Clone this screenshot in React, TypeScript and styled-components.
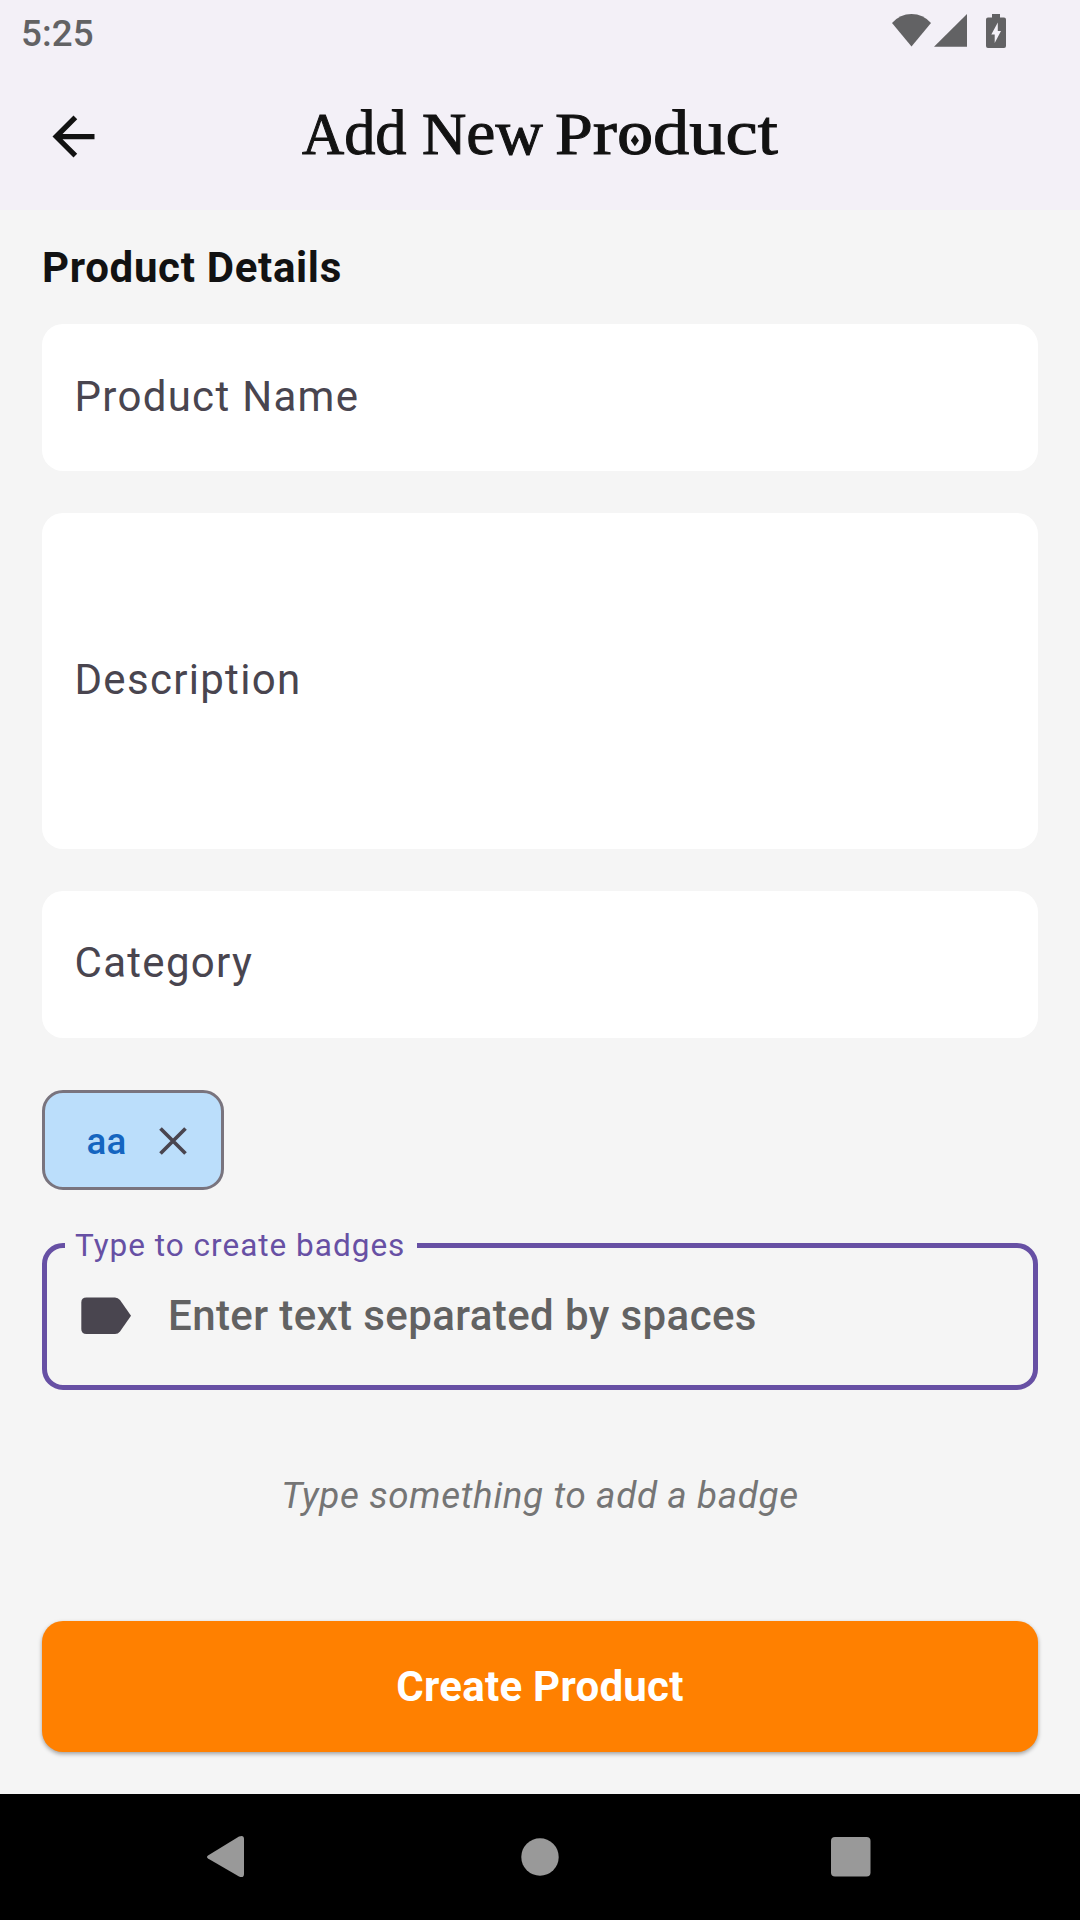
import React from "react";
import styled, { createGlobalStyle } from "styled-components";

const GlobalStyle = createGlobalStyle`
  * { box-sizing: border-box; }
  html, body { margin: 0; padding: 0; background: #f5f5f5; }
  body { font-family: Roboto, "Noto Sans", sans-serif; }
`;

const Screen = styled.div`
  width: 1080px;
  height: 1920px;
  display: flex;
  flex-direction: column;
  overflow: hidden;
  background: #f5f5f5;
`;

const StatusBar = styled.div`
  height: 63px;
  flex: none;
  display: flex;
  justify-content: space-between;
  padding: 0 72px 0 21px;
  background: #f3f0f7;
`;

const Clock = styled.span`
  font-size: 36.75px;
  line-height: 43px;
  padding-top: 12px;
  font-weight: 500;
  color: #626264;
  letter-spacing: 0.1px;
`;

const StatusIcons = styled.svg`
  width: 120px;
  height: 63px;
`;

const AppBar = styled.header`
  height: 147px;
  flex: none;
  display: grid;
  grid-template-columns: 147px 1fr 147px;
  align-items: center;
  background: #f3f0f7;
`;

const BackButton = styled.button`
  border: 0;
  padding: 0;
  background: none;
  display: flex;
  justify-content: center;
`;

const Title = styled.h1`
  margin: 0;
  padding-bottom: 7px;
  text-align: center;
  font-family: "Liberation Serif", serif;
  font-weight: 400;
  font-size: 59px;
  line-height: 70px;
  color: #121212;
  white-space: pre;
  -webkit-text-stroke: 1px #121212;
`;

const Word = styled.span<{ $width: number; $stretch: number }>`
  display: inline-block;
  width: ${(p) => p.$width}px;
  text-align: left;
  transform: scaleX(${(p) => p.$stretch});
  transform-origin: left;
  font-size: 63px;

  &::first-letter {
    font-size: 59px;
  }
`;

const StarO = styled.span`
  position: relative;
`;

const Sparkle = styled.svg`
  position: absolute;
  left: 50%;
  bottom: 21px;
  width: 7px;
  height: 13px;
  margin-left: -3.5px;
`;

const Form = styled.main`
  flex: 1;
  display: flex;
  flex-direction: column;
  padding: 33px 42px 42px;
`;

const SectionTitle = styled.h2`
  margin: 0 0 31px;
  height: 50px;
  font-size: 42px;
  line-height: 50px;
  font-weight: 700;
  letter-spacing: 0.68px;
  color: #121212;
`;

const Field = styled.div<{ $height: number; $lift?: number }>`
  height: ${(p) => p.$height}px;
  flex: none;
  margin-bottom: 42px;
  padding: 0 32.5px ${(p) => p.$lift ?? 3}px;
  display: flex;
  align-items: center;
  border-radius: 21px;
  background: #fff;
  color: #49454f;
  font-size: 42px;
  letter-spacing: 1.3px;
`;

const Chip = styled.div`
  width: 182px;
  height: 100px;
  flex: none;
  margin: 10px 0 37px;
  padding: 2px 34px 0 41.5px;
  display: flex;
  align-items: center;
  justify-content: space-between;
  border: 3px solid #79747e;
  border-radius: 21px;
  background: #bbdefb;
  color: #1565c0;
  font-size: 36.75px;
  font-weight: 500;
  letter-spacing: 0.26px;
`;

const RemoveIcon = styled.svg`
  width: 28px;
  height: 28px;
  margin-bottom: 1px;
`;

const BadgeField = styled.fieldset`
  height: 163px;
  flex: none;
  min-width: 0;
  margin: 0;
  padding: 0 34px;
  border: 5px solid #6750a4;
  border-radius: 21px;
`;

const Legend = styled.legend`
  height: 36px;
  margin-left: -16px;
  padding: 1px 12px 0 10px;
  font-size: 31.5px;
  line-height: 36px;
  color: #6750a4;
  letter-spacing: 1px;
`;

const BadgeInput = styled.div`
  height: 70px;
  margin-top: 17px;
  display: flex;
  align-items: center;
  gap: 37px;
  font-size: 42px;
  font-weight: 500;
  color: #626262;
  letter-spacing: 0.4px;
`;

const TagIcon = styled.svg`
  width: 50px;
  height: 38px;
  margin-top: 2px;
`;

const Helper = styled.p`
  margin: 84px 0 0;
  text-align: center;
  font-size: 36.75px;
  line-height: 44px;
  font-style: italic;
  color: #757575;
  letter-spacing: 0.66px;
`;

const SubmitButton = styled.button`
  margin-top: auto;
  height: 131px;
  flex: none;
  border: 0;
  border-radius: 21px;
  background: #ff8000;
  color: #fff;
  font-family: inherit;
  font-size: 42px;
  font-weight: 700;
  letter-spacing: 0.26px;
  box-shadow: 0 2px 4px rgba(0, 0, 0, 0.35);
`;

const NavBar = styled.nav`
  height: 126px;
  flex: none;
  display: flex;
  align-items: center;
  justify-content: space-between;
  padding: 0 194px;
  background: #000;
`;

const NavIcon = styled.svg`
  width: 70px;
  height: 70px;
  fill: #999;
`;

export default function App() {
  return (
    <Screen>
      <GlobalStyle />
      <StatusBar>
        <Clock>5:25</Clock>
        <StatusIcons viewBox="888 0 120 63" fill="#626264">
          <path d="M892 23Q900 14 911.500 14T931 23L911.500 46.500Z" />
          <path d="M934 46.700L967 14V46.700Z" />
          <path
            fillRule="evenodd"
            d="M992 14h8v3.500h4q2 0 2 2V46q0 2-2 2h-16q-2 0-2-2V19.500q0-2 2-2h4ZM997.800 22.500L991.300 34.500H994.700V43L1001 31H997.800Z"
          />
        </StatusIcons>
      </StatusBar>
      <AppBar>
        <BackButton aria-label="Back">
          <svg width="63" height="63" viewBox="0 0 24 24" fill="#121212">
            <path d="M20 11H7.830l5.590-5.590L12 4l-8 8 8 8 1.410-1.410L7.830 13H20z" />
          </svg>
        </BackButton>
        <Title>
          <Word $width={105} $stretch={0.99}>Add</Word>{" "}
          <Word $width={118} $stretch={1.04}>New</Word>{" "}
          <Word $width={223} $stretch={1.15}>
            Pr
            <StarO>
              o
              <Sparkle viewBox="0 0 8 13" fill="#121212">
                <path d="M4 0L8 6.500L4 13L0 6.500Z" />
              </Sparkle>
            </StarO>
            duct
          </Word>
        </Title>
      </AppBar>
      <Form>
        <SectionTitle>Product Details</SectionTitle>
        <Field $height={147}>Product Name</Field>
        <Field $height={336}>Description</Field>
        <Field $height={147} $lift={5}>Category</Field>
        <Chip>
          aa
          <RemoveIcon viewBox="0 0 28 28" stroke="#49454f" strokeWidth="3.700">
            <path d="M1.500 1.500L26.500 26.500M26.500 1.500L1.500 26.500" />
          </RemoveIcon>
        </Chip>
        <BadgeField>
          <Legend>Type to create badges</Legend>
          <BadgeInput>
            <TagIcon viewBox="0 0 50 38" fill="#49454f">
              <path d="M5.500 0.500H34Q37 0.500 39 3L50 18.800L39 34.500Q37 37 34 37H5.500Q0.300 37 0.300 32V5.500Q0.300 0.500 5.500 0.500Z" />
            </TagIcon>
            Enter text separated by spaces
          </BadgeInput>
        </BadgeField>
        <Helper>Type something to add a badge</Helper>
        <SubmitButton>Create Product</SubmitButton>
      </Form>
      <NavBar>
        <NavIcon viewBox="0 0 70 70">
          <path d="M14 33.500L45 14.500Q50 12.500 50 17V52Q50 56.500 45 54.500L14 36.500Q12 35 14 33.500Z" />
        </NavIcon>
        <NavIcon viewBox="0 0 70 70">
          <circle cx="35" cy="35" r="18.700" />
        </NavIcon>
        <NavIcon viewBox="0 0 70 70">
          <rect x="15" y="15" width="39.500" height="39.500" rx="4" />
        </NavIcon>
      </NavBar>
    </Screen>
  );
}
